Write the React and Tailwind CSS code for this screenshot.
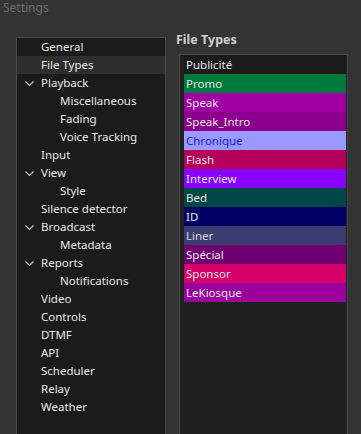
const tree = [
  { label: "General", level: 0 },
  { label: "File Types", level: 0, selected: true },
  { label: "Playback", level: 0, open: true },
  { label: "Miscellaneous", level: 1 },
  { label: "Fading", level: 1 },
  { label: "Voice Tracking", level: 1 },
  { label: "Input", level: 0 },
  { label: "View", level: 0, open: true },
  { label: "Style", level: 1 },
  { label: "Silence detector", level: 0 },
  { label: "Broadcast", level: 0, open: true },
  { label: "Metadata", level: 1 },
  { label: "Reports", level: 0, open: true },
  { label: "Notifications", level: 1 },
  { label: "Video", level: 0 },
  { label: "Controls", level: 0 },
  { label: "DTMF", level: 0 },
  { label: "API", level: 0 },
  { label: "Scheduler", level: 0 },
  { label: "Relay", level: 0 },
  { label: "Weather", level: 0 },
];

const fileTypes = [
  { label: "Publicité", bg: "bg-[#1b1b1b]", text: "text-[#e6e6e6]" },
  { label: "Promo", bg: "bg-[#007a3e]", text: "text-[#e6e6e6]" },
  { label: "Speak", bg: "bg-[#a000a3]", text: "text-[#e6e6e6]" },
  { label: "Speak_Intro", bg: "bg-[#8c008c]", text: "text-[#e6e6e6]" },
  { label: "Chronique", bg: "bg-[#9999ff]", text: "text-[#1c1cc8]" },
  { label: "Flash", bg: "bg-[#b4005a]", text: "text-[#e6e6e6]" },
  { label: "Interview", bg: "bg-[#8800ff]", text: "text-[#e6e6e6]" },
  { label: "Bed", bg: "bg-[#004646]", text: "text-[#e6e6e6]" },
  { label: "ID", bg: "bg-[#000064]", text: "text-[#e6e6e6]" },
  { label: "Liner", bg: "bg-[#3c3c73]", text: "text-[#d8d8d8]" },
  { label: "Spécial", bg: "bg-[#700070]", text: "text-[#e6e6e6]" },
  { label: "Sponsor", bg: "bg-[#d6006b]", text: "text-[#e0e0e0]" },
  { label: "LeKiosque", bg: "bg-[#9c009c]", text: "text-[#e6e6e6]" },
];

const Chevron = () => (
  <svg width="9" height="6" viewBox="0 0 9 6" className="absolute left-[8px] top-[7px]">
    <polyline points="0.5,0.5 4.5,4.5 8.5,0.5" fill="none" stroke="#c8c8c8" strokeWidth="1.2" />
  </svg>
);

const App = () => {
  return (
    <div
      className="w-[361px] h-[434px] bg-[#333333] overflow-hidden text-[11.5px] leading-none"
      style={{ fontFamily: '"Noto Sans", "Open Sans", sans-serif' }}
    >
      <div className="h-[2px] pl-[3px] pt-[2px] text-[12px] text-[#6c6c6c]">Settings</div>
      <div className="flex items-start">
        {/* tree */}
        <div className="ml-[16px] mt-[35px] w-[150px] h-[420px] border border-[#4a4a4a] bg-[#1b1b1b]">
          {tree.map((item) => (
            <div
              key={item.label}
              className={`relative h-[18px] flex items-center text-[#e8e8e8] ${
                item.selected ? "bg-[#2e2e2e]" : ""
              } ${item.level ? "pl-[43px]" : "pl-[24px]"}`}
            >
              {item.open && <Chevron />}
              {item.label}
            </div>
          ))}
        </div>

        {/* right side */}
        <div className="mt-[29px] ml-[10px] flex flex-col">
          <h2 className="h-[23px] pt-[3px] font-bold text-[12.5px] text-[#cfcfcf]">
            File Types
          </h2>
          <div className="ml-[3px] w-[169px] h-[400px] border border-[#484848] bg-[#1f1f1f] pl-[4px] pr-[1px]">
            {fileTypes.map((t) => (
              <div
                key={t.label}
                className={`h-[19px] flex items-center pl-[2px] ${t.bg} ${t.text}`}
              >
                {t.label}
              </div>
            ))}
          </div>
        </div>
      </div>
    </div>
  );
};

export default App;
